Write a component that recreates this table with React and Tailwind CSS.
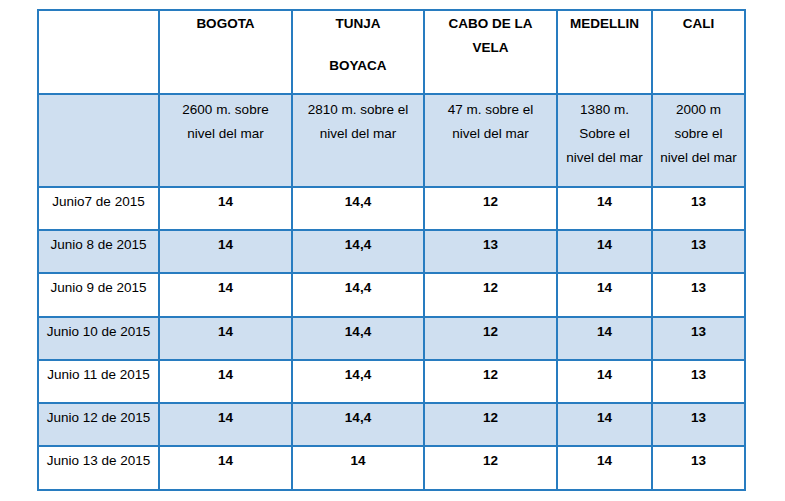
import React from "react";

const W = "bg-white";
const B = "bg-[#cfdff0]";

const data = [
  ["Junio7 de 2015", "14", "14,4", "12", "14", "13"],
  ["Junio 8 de 2015", "14", "14,4", "13", "14", "13"],
  ["Junio 9 de 2015", "14", "14,4", "12", "14", "13"],
  ["Junio 10 de 2015", "14", "14,4", "12", "14", "13"],
  ["Junio 11 de 2015", "14", "14,4", "12", "14", "13"],
  ["Junio 12 de 2015", "14", "14,4", "12", "14", "13"],
  ["Junio 13 de 2015", "14", "14", "12", "14", "13"],
];

export default function App() {
  return (
    <div className="w-[785px] h-[501px] bg-white pt-[9px] pl-[37px] text-[13.5px] leading-[24px] text-black font-['Liberation_Sans',Arial,sans-serif]">
      <div className="inline-grid grid-cols-[119px_131px_130px_131px_93px_91px] grid-rows-[82px_91px_41px_41px_42px_41px_41px_41px_42px] gap-[2px] p-[2px] bg-[#287cc0] text-center">
        {/* header row */}
        <div className={W}></div>
        <div className={`${W} font-bold pt-[1px]`}>BOGOTA</div>
        <div className={`${W} font-bold pt-[1px]`}>
          <div>TUNJA</div>
          <div className="mt-[18px]">BOYACA</div>
        </div>
        <div className={`${W} font-bold pt-[1px]`}>
          CABO DE LA
          <br />
          VELA
        </div>
        <div className={`${W} font-bold pt-[1px]`}>MEDELLIN</div>
        <div className={`${W} font-bold pt-[1px]`}>CALI</div>

        {/* altitude row */}
        <div className={B}></div>
        <div className={`${B} pt-[3px]`}>
          2600 m. sobre
          <br />
          nivel del mar
        </div>
        <div className={`${B} pt-[3px]`}>
          2810 m. sobre el
          <br />
          nivel del mar
        </div>
        <div className={`${B} pt-[3px]`}>
          47 m. sobre el
          <br />
          nivel del mar
        </div>
        <div className={`${B} pt-[3px]`}>
          1380 m.
          <br />
          Sobre el
          <br />
          nivel del mar
        </div>
        <div className={`${B} pt-[3px]`}>
          2000 m
          <br />
          sobre el
          <br />
          nivel del mar
        </div>

        {data.map((row, i) => {
          const bg = i % 2 === 0 ? W : B;
          return (
            <React.Fragment key={i}>
              <div className={`${bg} pt-[2px] whitespace-nowrap`}>{row[0]}</div>
              {row.slice(1).map((v, j) => (
                <div key={j} className={`${bg} pt-[2px] font-bold`}>
                  {v}
                </div>
              ))}
            </React.Fragment>
          );
        })}
      </div>
    </div>
  );
}
